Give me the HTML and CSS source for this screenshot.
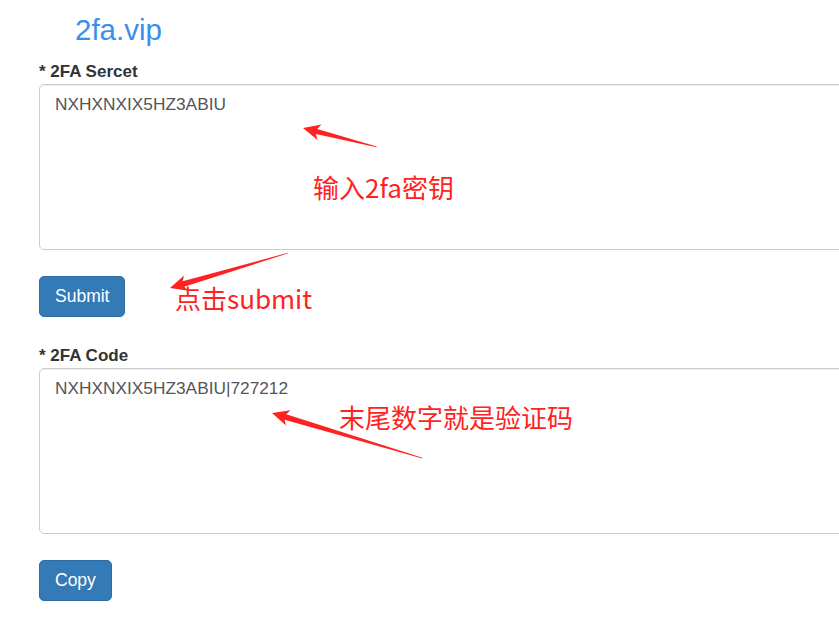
FILE: index.html
```html
<!DOCTYPE html>
<html lang="zh">
<head>
<meta charset="utf-8">
<title>2fa.vip</title>
<link rel="stylesheet" href="styles.css">
</head>
<body>
<main class="page">
  <h1 class="brand">2fa.vip</h1>
  <form class="form">
    <div class="group">
      <label class="label" for="secret">* 2FA Sercet</label>
      <textarea id="secret" class="field" readonly>NXHXNXIX5HZ3ABIU</textarea>
    </div>
    <button type="button" class="btn">Submit</button>
    <div class="group">
      <label class="label" for="code">* 2FA Code</label>
      <textarea id="code" class="field" readonly>NXHXNXIX5HZ3ABIU|727212</textarea>
    </div>
    <button type="button" class="btn">Copy</button>
  </form>
</main>

<div class="notes">
  <svg class="arrows" width="839" height="634" viewBox="0 0 839 634">
    <g fill="#ff2222">
      <polygon transform="translate(303 128) rotate(14.4)" points="0,0 17,-8 14,-2.6 76,-0.3 76,0.3 14,2.6 17,8"/>
      <polygon transform="translate(170 288) rotate(-16.5)" points="0,0 17,-8 14,-2.8 123,-0.3 123,0.3 14,2.8 17,8"/>
      <polygon transform="translate(272 413) rotate(16.7)" points="0,0 17,-8 14,-2.8 157,-0.3 157,0.3 14,2.8 17,8"/>
    </g>
  </svg>
  <span class="note note-secret">输入2fa密钥</span>
  <span class="note note-submit">点击submit</span>
  <span class="note note-code">末尾数字就是验证码</span>
</div>
</body>
</html>
```
FILE: styles.css
```css
html, body {
  margin: 0;
  padding: 0;
  overflow: hidden;
  background: #fff;
}
body {
  font-family: "Liberation Sans", Arial, sans-serif;
  color: #333;
  position: relative;
  width: 839px;
  height: 634px;
}
.page {
  box-sizing: border-box;
  width: 839px;
  height: 634px;
  overflow: hidden;
  padding: 13px 0 0 39px;
}
.brand {
  margin: 0 0 0 36px;
  font-size: 29.5px;
  line-height: 34px;
  font-weight: normal;
  color: #3b8fec;
}
.form {
  display: flex;
  flex-direction: column;
  align-items: flex-start;
}
.group {
  display: flex;
  flex-direction: column;
  margin-top: 12.5px;
}
.btn + .group {
  margin-top: 27px;
}
.label {
  font-size: 17px;
  font-weight: bold;
  line-height: 24px;
  color: #333;
}
.field {
  box-sizing: border-box;
  width: 880px;
  height: 166px;
  margin: 0;
  padding: 7px 15px;
  border: 1px solid #ccc;
  border-radius: 5px;
  font-family: "Liberation Sans", Arial, sans-serif;
  font-size: 17.3px;
  line-height: 24px;
  color: #555;
  resize: none;
  outline: none;
  box-shadow: inset 0 1px 1px rgba(0,0,0,0.075);
}
.btn {
  margin-top: 26px;
  height: 41px;
  padding: 0 15px;
  border: 1px solid #2e6da4;
  border-radius: 5px;
  background: #337ab7;
  color: #fff;
  font-family: "Liberation Sans", Arial, sans-serif;
  font-size: 17.5px;
  line-height: 24px;
  cursor: pointer;
}
.notes {
  position: absolute;
  left: 0;
  top: 0;
  width: 839px;
  height: 634px;
  pointer-events: none;
}
.arrows {
  position: absolute;
  left: 0;
  top: 0;
}
.note {
  position: absolute;
  font-family: "Noto Sans CJK SC", "Microsoft YaHei", sans-serif;
  font-size: 26px;
  line-height: 26px;
  color: #ff2222;
  white-space: nowrap;
}
.note-secret { left: 313px; top: 174px; }
.note-submit { left: 175px; top: 285px; }
.note-code { left: 339px; top: 404px; }
```
